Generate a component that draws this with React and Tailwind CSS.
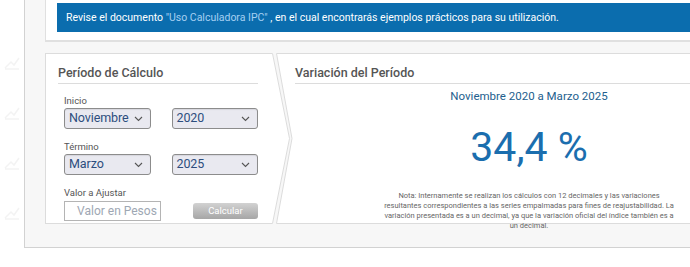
import React from 'react';

const Chevron = () => (
    <svg width="9" height="6" viewBox="0 0 9 6" className="shrink-0">
        <path d="M1 1l3.5 3.5L8 1" fill="none" stroke="#555" strokeWidth="1.1" />
    </svg>
);

const Select = ({ value, width }) => (
    <div className={`flex items-center justify-between h-[21px] ${width} bg-[#e9e9f0] border border-[#8c8c8c] rounded-[3px] pl-[4px] pr-[7px] shadow-[inset_0_1px_1px_rgba(0,0,0,0.08)]`}>
        <span className="text-[12.5px] tracking-[-0.1px] text-[#2d4e7e] leading-none">{value}</span>
        <Chevron />
    </div>
);

const Faint = () => (
    <svg width="20" height="20" viewBox="0 0 20 20">
        <path d="M3 16l6-6 3 3 5-7M3 17h14" fill="none" stroke="#f3f3f3" strokeWidth="1.5" />
    </svg>
);

const App = () => {
    return (
        <div className="w-[690px] h-[267px] overflow-hidden bg-white flex font-['Roboto',sans-serif]">
            {/* faint watermark column */}
            <div className="w-[24px] shrink-0 flex flex-col items-center gap-[30px] pt-[52px]">
                <Faint />
                <Faint />
                <Faint />
                <Faint />
            </div>

            <div className="w-[760px] shrink-0 h-[248px] bg-[#f7f7f7] border-l border-b border-[#d2d2d2] pl-[20px]">
                {/* banner box */}
                <div className="bg-white border-l border-b-2 border-[#e0e0e0] pl-[11px] pt-[3px] pb-[8px]">
                    <div className="h-[29px] bg-[#0b6dae] flex items-center pl-[9px] pt-[1px] text-[10.5px] text-white">
                        Revise el documento&nbsp;<span className="text-[#a6d0f2]">"Uso Calculadora IPC"</span>&nbsp;, en el cual encontrarás ejemplos prácticos para su utilización.
                    </div>
                </div>

                {/* panels */}
                <div className="flex mt-[11px] h-[171px]">
                    {/* left panel */}
                    <div className="flex relative z-10">
                        <div className="w-[227px] h-full bg-white border-l border-t border-b border-[#dcdcdc] pl-[12px] pr-[14px] pt-[11px]">
                            <h2 className="text-[12.5px] font-medium text-[#555] leading-[16px] pb-[2px] border-b border-[#dcdcdc]">Período de Cálculo</h2>
                            <div className="pl-[6px]">
                                <div className="text-[9.5px] text-[#555] mt-[11px] leading-[12px]">Inicio</div>
                                <div className="flex gap-[21px] mt-[1px]">
                                    <Select value="Noviembre" width="w-[90px]" />
                                    <Select value="2020" width="w-[90px]" />
                                </div>
                                <div className="text-[9.5px] text-[#555] mt-[12px] leading-[12px]">Término</div>
                                <div className="flex gap-[21px] mt-[1px]">
                                    <Select value="Marzo" width="w-[90px]" />
                                    <Select value="2025" width="w-[90px]" />
                                </div>
                                <div className="text-[9.5px] text-[#555] mt-[12px] leading-[12px]">Valor a Ajustar</div>
                                <div className="flex items-center mt-[2px]">
                                    <div className="w-[98px] h-[20px] bg-white border border-[#b4b4b4] flex items-center justify-end pr-[3px] text-[12px] text-[#9ea7b3]">Valor en Pesos</div>
                                    <button className="ml-[32px] w-[66px] h-[16px] rounded-[3px] bg-gradient-to-b from-[#d2d2d2] to-[#a6a6a6] text-white text-[9.5px] leading-none">Calcular</button>
                                </div>
                            </div>
                        </div>
                        <svg width="19" height="171" viewBox="0 0 19 171" className="shrink-0">
                            <path d="M0 0.5L0.5 0.5L17.5 85.5L0.5 170.5L0 170.5Z" fill="#fff" />
                            <path d="M0 0.5L0.5 0.5L17.5 85.5L0.5 170.5L0 170.5" fill="none" stroke="#dcdcdc" />
                        </svg>
                    </div>

                    {/* right panel */}
                    <div className="flex ml-[-15px]">
                        <svg width="17" height="171" viewBox="0 0 17 171" className="shrink-0">
                            <path d="M0.5 0.5L17 0.5L17 170.5L0.5 170.5L16 85.5Z" fill="#fff" />
                            <path d="M17 0.5L0.5 0.5L16 85.5L0.5 170.5L17 170.5" fill="none" stroke="#dcdcdc" />
                        </svg>
                        <div className="w-[470px] h-full bg-white border-t border-b border-[#dcdcdc] pl-[2px] pt-[11px] flex flex-col">
                            <h2 className="text-[12.5px] font-medium text-[#555] leading-[16px] pb-[2px] border-b border-[#dcdcdc]">Variación del Período</h2>
                            <div className="flex flex-col items-center">
                                <div className="text-[11.5px] text-[#23608e] mt-[5px] leading-[14px]">Noviembre 2020 a Marzo 2025</div>
                                <div className="text-[41px] text-[#1b6eae] leading-none mt-[24px]">34,4 %</div>
                                <p className="w-[290px] text-center text-[7.5px] leading-[10px] text-[#666] mt-[23px]">
                                    Nota: Internamente se realizan los cálculos con 12 decimales y las variaciones resultantes correspondientes a las series empalmadas para fines de reajustabilidad. La variación presentada es a un decimal, ya que la variación oficial del índice también es a un decimal.
                                </p>
                            </div>
                        </div>
                    </div>
                </div>
            </div>
        </div>
    );
};

export default App;
